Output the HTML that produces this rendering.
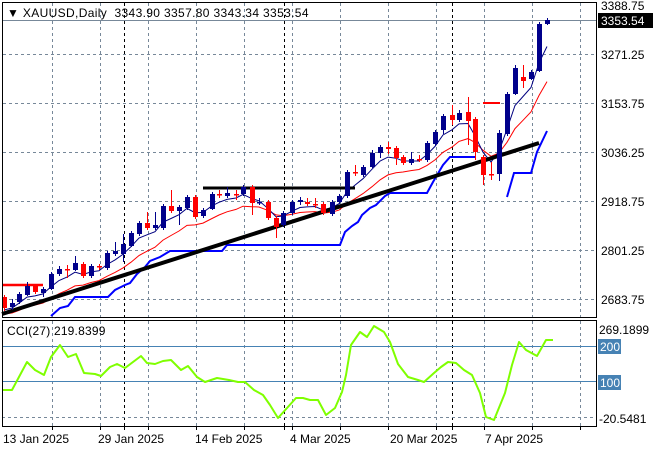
<!DOCTYPE html>
<html><head><meta charset="utf-8"><style>
html,body{margin:0;padding:0;background:#fff;width:660px;height:450px;overflow:hidden}
svg{display:block}
text{font-family:"Liberation Sans",sans-serif;font-size:12px;fill:#000}
</style></head><body>
<svg id="s" width="660" height="450" xmlns="http://www.w3.org/2000/svg">
<g id="grid" stroke="#778899" stroke-width="1" stroke-dasharray="3,3"></g>
<g id="sep" stroke="#000" stroke-width="1" stroke-dasharray="3,3"></g>
<line x1="2" y1="20.5" x2="596" y2="20.5" stroke="#778899"/>
<g id="ind"></g>
<g id="cdl"></g>
<line x1="2" y1="346.5" x2="596" y2="346.5" stroke="#4682B4"/>
<line x1="2" y1="381.5" x2="596" y2="381.5" stroke="#4682B4"/>
<line x1="2" y1="417.5" x2="596" y2="417.5" stroke="#778899" stroke-dasharray="3,3"/>
<polyline id="cci" fill="none" stroke="#7FFF00" stroke-width="2" stroke-linejoin="round"/>
<rect x="2.5" y="2.5" width="594" height="315" fill="none" stroke="#000"/>
<rect x="2.5" y="320.5" width="594" height="106" fill="none" stroke="#000"/>
<g id="ticks" stroke="#000"></g>
<text x="7" y="17" style="letter-spacing:0.35px">&#9660; XAUUSD,Daily&#160; 3343.90 3357.80 3343.34 3353.54</text>
<text x="7" y="335" style="letter-spacing:0.2px">CCI(27) 219.8399</text>
<g>
<text x="601" y="10">3388.75</text>
<rect x="598" y="13" width="55" height="15" fill="#000"/>
<text x="601" y="25" style="fill:#fff">3353.54</text>
<text x="601" y="59">3271.25</text>
<text x="601" y="108">3153.75</text>
<text x="601" y="157">3036.25</text>
<text x="601" y="206">2918.75</text>
<text x="601" y="255">2801.25</text>
<text x="601" y="304">2683.75</text>
<text x="599" y="334">269.1899</text>
<rect x="598" y="339" width="23" height="15" fill="#4682B4"/>
<text x="600" y="351" style="fill:#fff">200</text>
<rect x="598" y="375" width="23" height="15" fill="#4682B4"/>
<text x="600" y="387" style="fill:#fff">100</text>
<text x="599" y="423">-20.5481</text>
</g>
<g>
<text x="3" y="443">13 Jan 2025</text>
<text x="98" y="443">29 Jan 2025</text>
<text x="195" y="443">14 Feb 2025</text>
<text x="290" y="443">4 Mar 2025</text>
<text x="390" y="443">20 Mar 2025</text>
<text x="485" y="443">7 Apr 2025</text>
</g>
</svg>
<script>
var NS="http://www.w3.org/2000/svg";
function el(p,t,a){var e=document.createElementNS(NS,t);for(var k in a)e.setAttribute(k,a[k]);p.appendChild(e);return e;}
var g=document.getElementById('grid'),sp=document.getElementById('sep'),tk=document.getElementById('ticks');
for(var x=52;x<596;x+=48){el(g,'line',{x1:x+.5,y1:3,x2:x+.5,y2:317});el(g,'line',{x1:x+.5,y1:321,x2:x+.5,y2:426});el(tk,'line',{x1:x+.5,y1:427,x2:x+.5,y2:430});}
[54,103,152,201,250,299].forEach(function(y){el(g,'line',{x1:3,y1:y+.5,x2:596,y2:y+.5});});
[124,284,452].forEach(function(x){el(sp,'line',{x1:x+.5,y1:3,x2:x+.5,y2:317});el(sp,'line',{x1:x+.5,y1:321,x2:x+.5,y2:426});el(tk,'line',{x1:x+.5,y1:427,x2:x+.5,y2:430});});
var C=[[4,297,308,295,311],[12,307,303,299,310],[19,302,294,292,304],[27,295,286,282,296],[35,286,292,285,294],[43,293,289,287,297],
[51,289,274,272,290],[59,274,269,266,276],[67,269,270,265,278],[75,270,263,256,271],[83,264,276,262,278],[91,276,266,264,278],
[99,266,267,264,270],[107,268,253,251,270],[115,254,251,242,256],[123,254,244,234,262],[131,246,233,231,247],[139,234,223,221,236],
[147,223,228,212,230],[155,228,225,212,230],[163,228,206,204,230],[171,206,211,190,213],[179,211,207,205,225],[187,208,197,195,210],
[195,197,217,195,219],[203,216,210,208,218],[212,209,194,192,210],[219,194,195,190,198],[227,196,193,187,198],[236,194,194,190,200],
[243,194,187,185,196],[252,187,203,185,215],[259,203,202,198,205],[268,202,218,200,220],[276,218,227,216,238],[283,225,213,211,227],
[292,213,202,200,215],[300,202,200,197,205],[307,202,204,198,206],[315,204,204,198,208],[323,204,213,202,215],[332,214,202,200,216],
[339,202,196,194,204],[347,196,172,170,198],[355,172,173,165,176],[363,175,167,165,177],[372,167,153,150,168],[380,153,147,145,158],
[388,147,149,142,154],[396,148,158,146,165],[403,157,163,155,165],[411,163,159,152,165],[419,159,159,155,162],[427,160,143,141,162],
[435,144,132,130,146],[443,130,116,114,134],[452,115,120,105,125],[459,120,113,110,122],[468,112,121,97,145],[475,119,152,117,160],
[483,157,175,155,185],[491,174,175,162,180],[499,174,133,130,181],[507,134,94,92,136],[515,94,68,65,95],[523,77,81,65,88],
[531,79,72,70,80],[539,71,24,22,72],[547,24,20,18,25]];
var cd=document.getElementById('cdl'),ind=document.getElementById('ind');
C.forEach(function(c){var up=c[2]<c[1];var col=up?'#00008B':'#FF0000';
el(cd,'line',{x1:c[0]+.5,y1:c[3],x2:c[0]+.5,y2:c[4],stroke:col,'stroke-width':1});
var t=Math.min(c[1],c[2]),h=Math.max(Math.abs(c[1]-c[2]),1.5);
el(cd,'rect',{x:c[0]-2,y:t,width:5,height:h,fill:col});});
function ema(n,off){var a=2/(n+1),v=C[0][2],pts=[];C.forEach(function(c,i){v=i?v+a*(c[2]-v):c[2];pts.push(c[0]+','+(v+off).toFixed(1));});return pts.join(' ');}
el(ind,'polyline',{points:ema(9,6),fill:'none',stroke:'#FF0000','stroke-width':1});
el(ind,'polyline',{points:ema(4,2),fill:'none',stroke:'#000080','stroke-width':1});
el(ind,'polyline',{points:'3,285 43,285',fill:'none',stroke:'#FF0000','stroke-width':2.5});
el(ind,'polyline',{points:'203,188 355,188',fill:'none',stroke:'#000','stroke-width':3});
el(ind,'polyline',{points:'483,103 500,103',fill:'none',stroke:'#FF0000','stroke-width':2});
el(ind,'polyline',{points:'51,316 60,308 68,306 75,297 108,297 115,290 125,285 130,283 137,274 145,267 150,261 160,257 170,251 222,251 227,245 340,245 345,232 352,226 358,222 362,215 370,208 376,205 385,196 390,193 427,193 433,182 443,165 450,157 475,157',fill:'none',stroke:'#0000FF','stroke-width':2});
el(ind,'polyline',{points:'507,197 514,173 531,173 537,152 547,131',fill:'none',stroke:'#0000FF','stroke-width':2});
el(ind,'line',{x1:2,y1:314,x2:539,y2:143,stroke:'#000','stroke-width':4});
document.getElementById('cci').setAttribute('points','3,390 12,390 27,362 35,370 44,375 51,357 60,345 68,357 76,354 84,373 95,374 101,376 110,367 117,364 125,368 141,356 147,363 155,364 163,361 171,360 181,370 188,366 197,377 205,382 217,378 229,380 238,382 245,382 254,390 263,395 270,405 278,418 287,408 296,398 303,398 310,400 318,400 326,415 335,408 342,392 346,375 351,345 360,332 367,337 374,326 384,332 390,342 398,364 408,377 418,380 424,382 434,373 441,367 448,362 456,363 464,370 472,375 480,393 486,417 494,420 505,393 512,365 519,342 526,350 537,356 546,340 553,340');
</script>
</body></html>
